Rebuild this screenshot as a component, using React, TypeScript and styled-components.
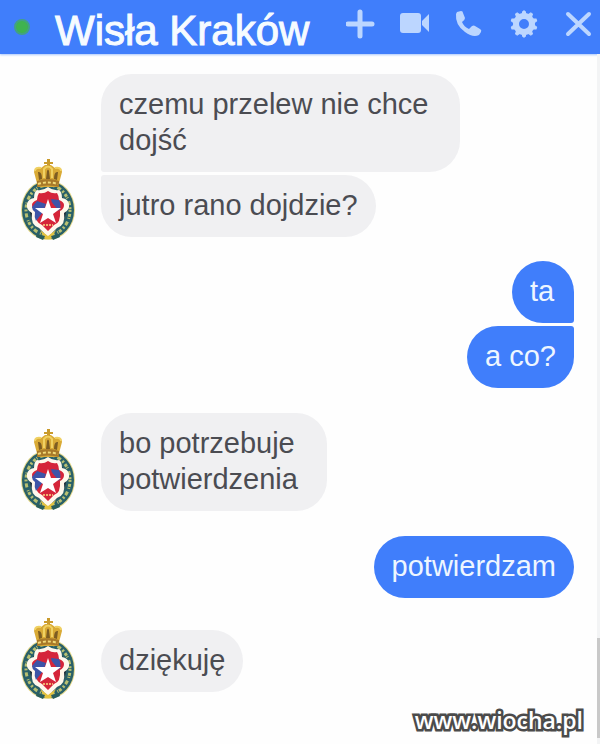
import React from "react";
import styled, { createGlobalStyle, css } from "styled-components";

const Global = createGlobalStyle`
  *, *::before, *::after { box-sizing: border-box; }
  body {
    margin: 0;
    background: #fefefe;
    color: #4b4c52;
    font-family: "Liberation Sans", Arial, sans-serif;
  }
`;

const Window = styled.main`
  position: relative;
  min-height: 100vh;
  display: flex;
  flex-direction: column;
`;

const Header = styled.header`
  display: flex;
  align-items: flex-start;
  height: 54px;
  padding: 0 6px 0 14px;
  background: #407efb;
  box-shadow: 0 1px 2px #a9c6fb;
`;

const Presence = styled.span`
  flex: none;
  width: 16px;
  height: 16px;
  margin-top: 19px;
  border-radius: 50%;
  border: 2px solid #42a184;
  background: #3fb34f;
`;

const Title = styled.h1`
  flex: 1;
  margin: 7px 0 0 25px;
  color: #f6fbff;
  font-size: 42px;
  line-height: 48px;
  font-weight: 400;
  white-space: nowrap;
  -webkit-text-stroke: 1px #f6fbff;
`;

const Actions = styled.nav`
  display: flex;
  gap: 22px;
  padding-top: 8px;
`;

const IconButton = styled.button`
  display: block;
  width: 32px;
  height: 32px;
  padding: 0;
  border: 0;
  background: none;
  color: #bcd6ff;
  cursor: pointer;

  svg {
    display: block;
  }
`;

const Body = styled.div`
  flex: 1;
  display: flex;
`;

const Thread = styled.section`
  flex: 1;
  padding: 20px 23px 38px 20px;
`;

const ScrollTrack = styled.div`
  flex: none;
  display: flex;
  flex-direction: column;
  justify-content: flex-end;
  width: 3px;
  padding-bottom: 6px;
  background: #f3f4f5;
`;

const ScrollThumb = styled.div`
  height: 100px;
  background: #c9c9c9;
`;

type Side = "in" | "out";

const Group = styled.article<{ $side: Side; $space: number }>`
  display: flex;
  align-items: flex-end;
  gap: 26px;
  margin-top: ${(p) => p.$space}px;
  justify-content: ${(p) => (p.$side === "in" ? "flex-start" : "flex-end")};
`;

const Stack = styled.div<{ $side: Side; $drop: number }>`
  display: flex;
  flex-direction: column;
  gap: 3px;
  padding-bottom: ${(p) => p.$drop}px;
  align-items: ${(p) => (p.$side === "in" ? "flex-start" : "flex-end")};
`;

const incoming = css`
  background: #f0f0f2;
  &:not(:last-child) { border-bottom-left-radius: 3px; }
  &:not(:first-child) { border-top-left-radius: 3px; }
`;

const outgoing = css`
  background: #407efb;
  color: #eef6ff;
  &:not(:last-child) { border-bottom-right-radius: 3px; }
  &:not(:first-child) { border-top-right-radius: 3px; }
`;

const Bubble = styled.p<{ $side: Side; $limit: number }>`
  margin: 0;
  min-width: 62px;
  max-width: ${(p) => p.$limit}px;
  padding: 12px 18px 14px;
  border-radius: 31px;
  font-size: 29px;
  line-height: 36px;
  ${(p) => (p.$side === "in" ? incoming : outgoing)}
`;

const CrestSvg = styled.svg`
  flex: none;
  display: block;
  width: 55px;
  height: 82px;
`;

const Watermark = styled.a`
  position: absolute;
  right: 17px;
  bottom: 8px;
  color: #ffffff;
  font-family: "Open Sans", "Noto Sans", sans-serif;
  font-size: 23px;
  line-height: 32px;
  font-weight: 600;
  text-decoration: none;
  -webkit-text-stroke: 5px #4b4b4b;
  paint-order: stroke fill;
  stroke-linejoin: round;
`;

function Crest() {
  return (
    <CrestSvg viewBox="0 0 55 82" role="img" aria-label="Wisła Kraków">
      <ellipse cx="28" cy="51" rx="27" ry="30" fill="#e6d98a" />
      <ellipse cx="28" cy="51" rx="22" ry="25" fill="#1f2c38" stroke="#2a6068" strokeWidth="8" />
      <ellipse
        cx="28" cy="51" rx="22" ry="25" fill="none"
        stroke="#b9c071" strokeWidth="3" strokeDasharray="2 2 3 1 1 3 4 2"
      />
      <path
        d="M17 31q6 1 11-3 5 4 11 3 3 2 3 8 6 1 7 6 1 6-5 9 2 12-7 15-5 5-9 9-4-4-9-9-9-3-7-15-6-3-5-9 1-5 7-6 0-6 3-8z"
        fill="#fff8ec"
      />
      <path
        d="M19 34q5 1 9-2 4 3 9 2 2 3 2 7 5 2 5 5 0 4-4 6 1 12-6 14l-6 6-6-6q-7-2-6-14-4-2-4-6 0-3 5-5 0-4 2-7z"
        fill="#d5253a"
      />
      <path d="M17 42l9 3-3 8-7 9q-2-4-1-9-3-2-3-5zM39 41l-8-1q0 3 3 6l5 6q3-5 0-11z" fill="#3d54a8" />
      <path d="M28 40l3 9h10l-8 6 3 9-8-5-8 5 3-9-8-6h10z" fill="#fff" />
      <path d="M23 66h10" stroke="#f0b070" strokeWidth="2" strokeDasharray="2 1" />
      <path d="M20 71l8 6 8-6-5 9h-6z" fill="#e5c33f" />
      <path d="M17 75l8 2-2 4-7-3zM39 75l-8 2 2 4 7-3z" fill="#285d5d" />
      <path d="M18 28L14 13q1-5 7-4l4-3h6l4 3q7-1 7 4l-4 15z" fill="#d9aa36" />
      <path d="M27 0h3v3h3v2h-3v3h-3V5h-3V3h3z" fill="#c99a2c" />
      <path d="M18 13q4-1 4 7l-3 1zM38 13q-4-1-4 7l3 1zM27 12q1-3 2 0l1 8h-4z" fill="#7d5c22" />
      <path d="M15 12q0-4 6-3M41 12q0-4-6-3M24 19V10q4-5 8 0v9" fill="none" stroke="#f0d163" strokeWidth="2" />
      <path d="M17 22q11-4 22 0v6q-11-3-22 0z" fill="#a8792a" />
      <path d="M18 25q10-3 20 0" fill="none" stroke="#f2da78" strokeWidth="2" strokeDasharray="3 2" />
    </CrestSvg>
  );
}

const teeth = [0, 36, 72, 108, 144, 180, 216, 252, 288, 324];

const actions = [
  {
    label: "Dodaj osobę",
    icon: <path d="M14 4v24M2 16h24" stroke="currentColor" strokeWidth="5" strokeLinecap="round" />,
  },
  {
    label: "Rozmowa wideo",
    icon: (
      <>
        <rect x="0" y="5" width="21" height="20" rx="3" fill="currentColor" />
        <path d="M22 13l7-7v18l-7-7z" fill="currentColor" />
      </>
    ),
  },
  {
    label: "Zadzwoń",
    icon: (
      <path
        d="M3 4l4-1q2 0 2 2l2 5q0 2-3 4 2 5 7 7l3-3q2-1 3 0l5 3q2 1 1 3l-2 3q-6 3-14-3Q1 17 2 6z"
        fill="currentColor"
      />
    ),
  },
  {
    label: "Ustawienia",
    icon: (
      <>
        <circle cx="16" cy="16" r="8" fill="none" stroke="currentColor" strokeWidth="6" />
        {teeth.map((angle) => (
          <path key={angle} d="M14 6l1-3h2l1 3z" fill="currentColor" stroke="currentColor" transform={`rotate(${angle} 16 16)`} />
        ))}
      </>
    ),
  },
  {
    label: "Zamknij",
    icon: <path d="M6 6l21 20M27 6L6 26" stroke="currentColor" strokeWidth="4" strokeLinecap="round" />,
  },
];

type MessageGroup = {
  side: Side;
  space: number;
  drop: number;
  limit: number;
  lines: string[];
};

const groups: MessageGroup[] = [
  { side: "in", space: 0, drop: 4, limit: 359, lines: ["czemu przelew nie chce dojść", "jutro rano dojdzie?"] },
  { side: "out", space: 20, drop: 0, limit: 359, lines: ["ta", "a co?"] },
  { side: "in", space: 25, drop: 0, limit: 226, lines: ["bo potrzebuje potwierdzenia"] },
  { side: "out", space: 25, drop: 0, limit: 359, lines: ["potwierdzam"] },
  { side: "in", space: 20, drop: 8, limit: 359, lines: ["dziękuję"] },
];

export default function App() {
  return (
    <>
      <Global />
      <Window>
        <Header>
          <Presence />
          <Title>Wisła Kraków</Title>
          <Actions>
            {actions.map((action) => (
              <IconButton key={action.label} type="button" aria-label={action.label}>
                <svg width="32" height="32" viewBox="0 0 32 32">{action.icon}</svg>
              </IconButton>
            ))}
          </Actions>
        </Header>
        <Body>
          <Thread>
            {groups.map((group) => (
              <Group key={group.lines[0]} $side={group.side} $space={group.space}>
                {group.side === "in" && <Crest />}
                <Stack $side={group.side} $drop={group.drop}>
                  {group.lines.map((line) => (
                    <Bubble key={line} $side={group.side} $limit={group.limit}>{line}</Bubble>
                  ))}
                </Stack>
              </Group>
            ))}
          </Thread>
          <ScrollTrack>
            <ScrollThumb />
          </ScrollTrack>
        </Body>
        <Watermark href="#">www.wiocha.pl</Watermark>
      </Window>
    </>
  );
}
